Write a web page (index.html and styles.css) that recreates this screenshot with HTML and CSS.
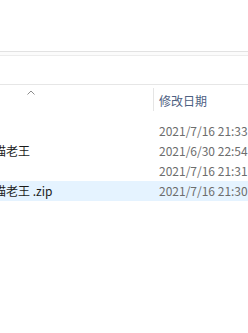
FILE: index.html
```html
<!DOCTYPE html>
<html lang="zh-CN">
<head>
  <meta charset="UTF-8">
  <title>文件列表</title>
  <link rel="stylesheet" href="styles.css">
</head>
<body>
  <div class="ribbon"></div>
  <div class="gap"></div>
  <div class="bar"></div>

  <div class="header">
    <div class="col-name">
      <svg class="caret" width="8" height="5" viewBox="0 0 8 5">
        <path d="M0.5 4.5 L4 1 L7.5 4.5" fill="none" stroke="#8c8c8c" stroke-width="1"/>
      </svg>
    </div>
    <div class="col-date"><span class="head-text">修改日期</span></div>
  </div>

  <div class="list">
    <div class="row">
      <div class="col-name"></div>
      <div class="col-date">2021/7/16 21:33</div>
    </div>
    <div class="row">
      <div class="col-name"><span class="name">喵老王</span></div>
      <div class="col-date">2021/6/30 22:54</div>
    </div>
    <div class="row">
      <div class="col-name"></div>
      <div class="col-date">2021/7/16 21:31</div>
    </div>
    <div class="row selected">
      <div class="col-name"><span class="name">喵老王 .zip</span></div>
      <div class="col-date">2021/7/16 21:30</div>
    </div>
  </div>
</body>
</html>
```

FILE: styles.css
```css
body {
  margin: 0;
  background: #fff;
  font-family: "Noto Sans CJK SC", "Noto Sans", sans-serif;
  font-size: 12px;
  overflow: hidden;
}
.ribbon {
  height: 51px;
  border-bottom: 1px solid #e2e2e2;
}
.gap {
  height: 3px;
  background: #fbfbfb;
  border-bottom: 1px solid #ececec;
}
.bar {
  height: 28px;
  border-bottom: 1px solid #e6e6e6;
}
.header {
  display: flex;
  height: 26px;
}
.col-name {
  width: 153px;
  flex-shrink: 0;
  overflow: hidden;
  white-space: nowrap;
}
.col-date {
  flex: 1;
  padding-left: 6px;
  white-space: nowrap;
  overflow: hidden;
  color: #6d6d6d;
}
.caret {
  display: block;
  margin: 5px 0 0 27px;
}
.header .col-date {
  border-left: 1px solid #e5e5e5;
  margin-top: 3px;
  padding-left: 5px;
  padding-top: 4px;
  color: #4d6082;
}
.list {
  padding-top: 10px;
}
.row {
  display: flex;
  height: 20px;
  line-height: 20px;
}
.row.selected {
  background: #e5f3ff;
}
.name {
  display: inline-block;
  margin-left: -6px;
  color: #1b1b1b;
}
```
